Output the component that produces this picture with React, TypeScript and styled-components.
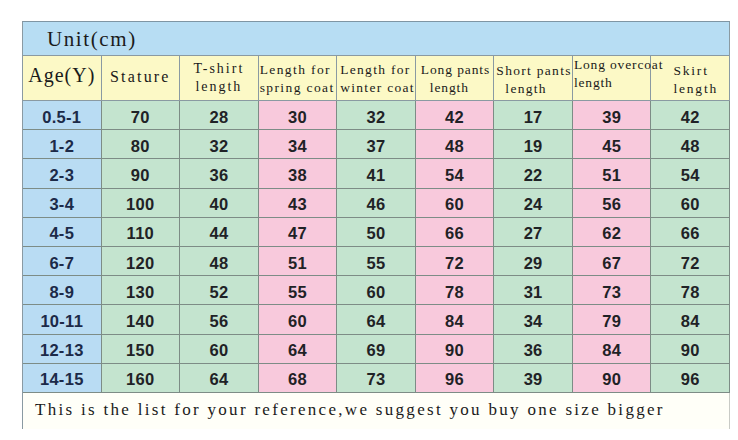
import React from "react";
import styled, { createGlobalStyle } from "styled-components";

const Global = createGlobalStyle`
  html, body { margin: 0; padding: 0; background: #ffffff; }
  body { width: 738px; height: 440px; overflow: hidden; }
`;

const Page = styled.div`
  padding: 21px 8px 0 22px;
`;

const Table = styled.div`
  width: 708px;
  display: grid;
  grid-template-columns: repeat(9, minmax(0, 1fr));
  grid-template-rows: 34px 45px repeat(10, 29.2px) 36px;
  border-top: 1px solid #7f95a3;
  border-left: 1px solid #8a9aa2;
  box-sizing: border-box;
`;

const serif = `"Liberation Serif", "DejaVu Serif", serif`;

const TitleCell = styled.div`
  grid-column: 1 / -1;
  background: #b7ddf3;
  border-right: 1px solid #8a9aa2;
  border-bottom: 1px solid #8a9aa2;
  font-family: ${serif};
  font-size: 21px;
  letter-spacing: 1.6px;
  color: #1a1a1a;
  display: flex;
  align-items: center;
  padding-left: 24px;
  padding-top: 1px;
`;

const HeadCell = styled.div<{ $align?: "left" | "center"; $pl?: number; $pt?: number; $size?: number; $ls?: number; $over?: boolean }>`
  position: relative;
  background: #fcf9c6;
  border-right: 1px solid #8a9aa2;
  border-bottom: 1px solid #8a9aa2;
  box-sizing: border-box;
  font-family: ${serif};
  font-size: ${(p) => p.$size ?? 13.5}px;
  letter-spacing: ${(p) => p.$ls ?? 1.2}px;
  line-height: 18px;
  color: #1a1a1a;
  display: flex;
  flex-direction: column;
  justify-content: flex-start;
  align-items: ${(p) => (p.$align === "left" ? "flex-start" : "center")};
  padding-left: ${(p) => p.$pl ?? 0}px;
  padding-top: ${(p) => p.$pt ?? 2}px;
  white-space: nowrap;
  overflow: visible;
  z-index: ${(p) => (p.$over ? 2 : 1)};
`;

const HeadLine = styled.span<{ $indent?: number }>`
  display: block;
  padding-left: ${(p) => p.$indent ?? 0}px;
`;

const DataCell = styled.div<{ $tone: "blue" | "green" | "pink"; $light?: boolean }>`
  background: ${(p) => (p.$tone === "blue" ? "#b9dcf3" : p.$tone === "pink" ? "#f8c9dc" : "#c4e4cf")};
  border-right: 1px solid #7d8c86;
  border-bottom: 1px solid #7d8c86;
  box-sizing: border-box;
  font-family: "Liberation Sans", Arial, sans-serif;
  font-weight: ${(p) => (p.$light ? 600 : 700)};
  font-size: 16.5px;
  color: ${(p) => (p.$tone === "blue" ? "#1c2a48" : "#1f2226")};
  display: flex;
  align-items: center;
  justify-content: center;
  padding-top: 4px;
  letter-spacing: 0.3px;
`;

const Footer = styled.div`
  grid-column: 1 / -1;
  background: #fffff8;
  border-right: 1px solid #c9cbc6;
  font-family: ${serif};
  font-size: 17px;
  letter-spacing: 2.3px;
  color: #1a1a1a;
  display: flex;
  align-items: center;
  padding-left: 12px;
  padding-bottom: 2px;
  white-space: nowrap;
`;

type Header = { lines: string[]; align?: "left" | "center"; pl?: number; pt?: number; size?: number; ls?: number; indents?: number[]; over?: boolean };

const headers: Header[] = [
  { lines: ["Age(Y)"], size: 20, ls: 1, pt: 10 },
  { lines: ["Stature"], size: 16, ls: 2.2, pt: 12 },
  { lines: ["T-shirt", "length"], size: 14, ls: 2, pt: 4 },
  { lines: ["Length for", "spring coat"], align: "left", pl: 1, pt: 5, ls: 1.4 },
  { lines: ["Length for", "winter coat"], align: "left", pl: 3, pt: 5, ls: 1.3 },
  { lines: ["Long pants", "length"], align: "left", pl: 5, pt: 5, ls: 0.9, indents: [0, 9] },
  { lines: ["Short pants", "length"], align: "left", pl: 2, pt: 6, ls: 1.3, indents: [0, 9] },
  { lines: ["Long overcoat", "length"], align: "left", pl: 1, pt: 0, ls: 0.85, over: true },
  { lines: ["Skirt", "length"], align: "left", pl: 21, pt: 6, ls: 1.8, indents: [1, 1] },
];

const rows: string[][] = [
  ["0.5-1", "70", "28", "30", "32", "42", "17", "39", "42"],
  ["1-2", "80", "32", "34", "37", "48", "19", "45", "48"],
  ["2-3", "90", "36", "38", "41", "54", "22", "51", "54"],
  ["3-4", "100", "40", "43", "46", "60", "24", "56", "60"],
  ["4-5", "110", "44", "47", "50", "66", "27", "62", "66"],
  ["6-7", "120", "48", "51", "55", "72", "29", "67", "72"],
  ["8-9", "130", "52", "55", "60", "78", "31", "73", "78"],
  ["10-11", "140", "56", "60", "64", "84", "34", "79", "84"],
  ["12-13", "150", "60", "64", "69", "90", "36", "84", "90"],
  ["14-15", "160", "64", "68", "73", "96", "39", "90", "96"],
];

const tones: ("blue" | "green" | "pink")[] = ["blue", "green", "green", "pink", "green", "pink", "green", "pink", "green"];

export default function App() {
  return (
    <>
      <Global />
      <Page>
        <Table>
          <TitleCell>Unit(cm)</TitleCell>
          {headers.map((h, i) => (
            <HeadCell key={i} $align={h.align} $pl={h.pl} $pt={h.pt} $size={h.size} $ls={h.ls} $over={h.over}>
              {h.lines.map((l, j) => (
                <HeadLine key={j} $indent={h.indents?.[j]}>
                  {l}
                </HeadLine>
              ))}
            </HeadCell>
          ))}
          {rows.map((r, ri) =>
            r.map((v, ci) => (
              <DataCell key={`${ri}-${ci}`} $tone={tones[ci]} $light={ri === 8 && ci === 5}>
                {v}
              </DataCell>
            ))
          )}
          <Footer>This is the list for your reference,we suggest you buy one size bigger</Footer>
        </Table>
      </Page>
    </>
  );
}
